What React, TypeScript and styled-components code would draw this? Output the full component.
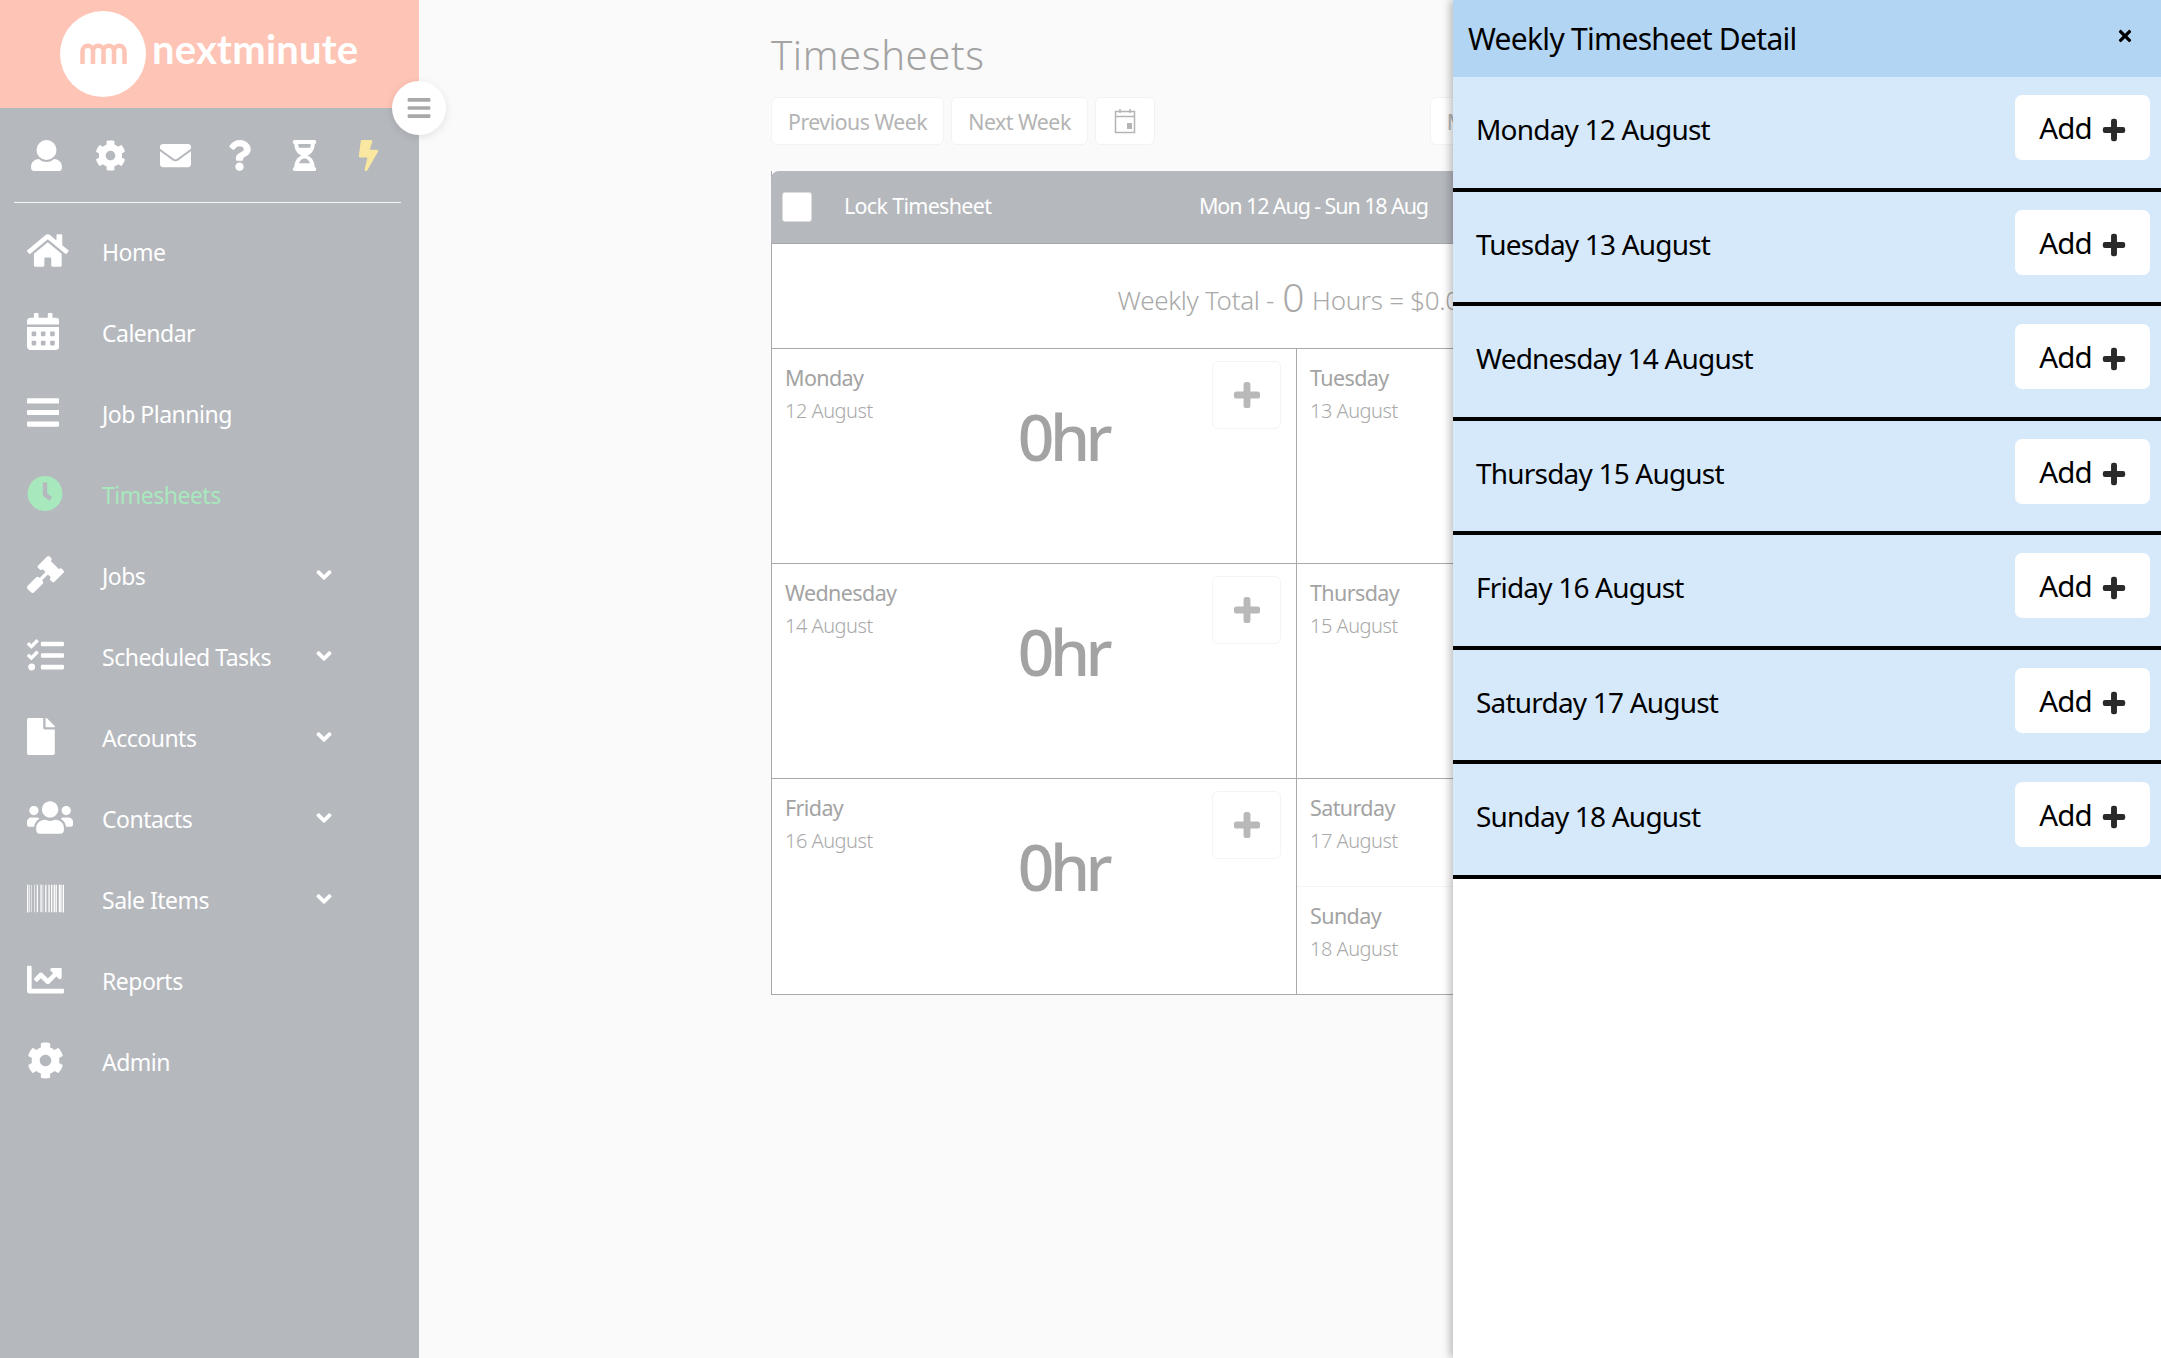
import { ReactNode } from 'react';
import styled, { createGlobalStyle } from 'styled-components';
import {
  FaAngleDown, FaBarcode, FaBars, FaBolt, FaCalendarAlt, FaChartLine, FaClock, FaCog, FaEnvelope,
  FaFile, FaGavel, FaHome, FaHourglassHalf, FaPlus, FaQuestion, FaTasks, FaTimes, FaUsers,
} from 'react-icons/fa';

const GlobalStyle = createGlobalStyle`
  html, body {
    margin: 0;
    padding: 0;
    background: #fafafa;
    font-family: "Noto Sans", "Open Sans", sans-serif;
  }
  * { box-sizing: border-box; }
`;

const Page = styled.div`
  position: relative;
  display: flex;
  height: 1358px;
  overflow: hidden;
`;

const Sidebar = styled.aside`
  position: relative;
  width: 419px;
  flex-shrink: 0;
  background: #b5b8bd;
`;

const Brand = styled.div`
  height: 108px;
  background: #fec4b5;
  display: flex;
  align-items: center;
  padding: 0 0 0 60px;
  gap: 6px;
`;

const LogoMark = styled.svg`
  width: 86px;
  height: 86px;
  flex-shrink: 0;
`;

const BrandName = styled.span`
  font-family: Lato, sans-serif;
  font-size: 40px;
  font-weight: 700;
  color: #fff;
  letter-spacing: 0.2px;
  margin-top: -10px;
`;

const Toggle = styled.button`
  position: absolute;
  left: 392px;
  top: 81px;
  width: 54px;
  height: 54px;
  border: none;
  border-radius: 50%;
  background: #fff;
  color: #a9a9a9;
  box-shadow: 0 2px 8px rgba(0, 0, 0, 0.1);
  display: flex;
  align-items: center;
  justify-content: center;
  font-size: 26px;
  padding: 0;
`;

const QuickIcons = styled.div`
  display: grid;
  grid-template-columns: repeat(6, 64.5px);
  padding: 32px 0 0 14px;
  height: 94px;
`;

const QuickIcon = styled.span<{ $accent?: boolean }>`
  display: flex;
  justify-content: center;
  align-items: flex-start;
  color: ${(p) => (p.$accent ? '#fbe8a0' : '#fff')};
  svg {
    height: 31px;
    width: 31px;
  }
`;

const Divider = styled.hr`
  margin: 0 18px 10px 14px;
  border: none;
  border-top: 1px solid #f4f4f4;
`;

const NavRow = styled.div<{ $active?: boolean }>`
  height: 81px;
  display: flex;
  align-items: center;
  padding-left: 27px;
  color: ${(p) => (p.$active ? '#a8e8bd' : '#fff')};
  font-size: 23px;
  letter-spacing: -0.5px;
`;

const NavIcon = styled.span<{ $width: number }>`
  width: 75px;
  flex-shrink: 0;
  display: flex;
  margin-bottom: 6px;
  svg {
    height: 37px;
    width: ${(p) => p.$width}px;
  }
`;

const NavLabel = styled.span`
  flex: 1;
  margin-bottom: 3px;
`;

const Chevron = styled(FaAngleDown)`
  width: 24px;
  height: 24px;
  margin: 0 83px 6px 0;
`;

const Main = styled.main`
  flex: 1;
  padding: 28px 0 0 352px;
`;

const Title = styled.h1`
  margin: 0 0 15px;
  font-size: 40px;
  line-height: 54px;
  font-weight: 300;
  color: #a3a3a3;
  letter-spacing: 0.6px;
`;

const Toolbar = styled.div`
  display: flex;
  gap: 7px;
  margin-bottom: 26px;
`;

const ToolButton = styled.button<{ $push?: number }>`
  height: 48px;
  padding: 0 16px;
  background: #fff;
  border: 1px solid #f3f3f3;
  border-radius: 6px;
  color: #b4b4b4;
  font: inherit;
  font-size: 21.3px;
  letter-spacing: -0.5px;
  margin-left: ${(p) => p.$push ?? 0}px;
  display: flex;
  align-items: center;
`;

const CalendarGlyph = styled.svg`
  width: 24px;
  height: 26px;
  margin: 0 1px;
`;

const Card = styled.section`
  width: 1050px;
  border: 1px solid #a9a9a9;
  border-top: none;
  background: #fff;
`;

const CardHead = styled.header`
  height: 73px;
  margin: 0 -1px;
  background: #b5b8bd;
  border-radius: 8px 8px 0 0;
  border-bottom: 1px solid #a9a9a9;
  display: flex;
  align-items: center;
  padding: 0 393px 3px 11px;
  color: #fff;
  font-size: 21.5px;
  letter-spacing: -0.7px;
`;

const LockBox = styled.span`
  width: 30px;
  height: 30px;
  background: #fff;
  border: 1px solid #dcdcdc;
  border-radius: 3px;
  margin: 3px 32px 0 0;
`;

const DateRange = styled.span`
  margin-left: auto;
  letter-spacing: -1.1px;
`;

const TotalRow = styled.div`
  height: 105px;
  display: flex;
  align-items: center;
  justify-content: center;
  gap: 8px;
  padding-top: 8px;
  color: #a9a9a9;
  font-size: 26px;
  font-weight: 300;
  letter-spacing: -0.3px;
  border-bottom: 1px solid #a9a9a9;
`;

const TotalHours = styled.span`
  font-size: 39px;
  line-height: 1;
  margin-top: -8px;
`;

const DayGrid = styled.div`
  display: grid;
  grid-template-columns: 524px 1fr;
  grid-auto-rows: 215px;
`;

const DayCell = styled.div<{ $right?: boolean; $last?: boolean }>`
  display: grid;
  grid-template-columns: 132px 1fr 69px;
  padding: 13px 15px 0 13px;
  border-bottom: ${(p) => (p.$last ? 'none' : '1px solid #a9a9a9')};
  border-left: ${(p) => (p.$right ? '1px solid #a9a9a9' : 'none')};
`;

const SplitCell = styled.div`
  display: grid;
  grid-template-rows: 1fr 1fr;
  border-left: 1px solid #a9a9a9;
`;

const SplitPart = styled.div<{ $divided?: boolean }>`
  padding: 13px 13px 0;
  border-bottom: ${(p) => (p.$divided ? '1px solid #f5f5f5' : 'none')};
`;

const DayName = styled.div`
  font-size: 21.5px;
  line-height: 30px;
  margin-top: 1px;
  color: #a3a3a3;
  letter-spacing: -0.6px;
`;

const DayDate = styled.div`
  font-size: 20px;
  font-weight: 300;
  line-height: 30px;
  margin-top: 3px;
  color: #a9a9a9;
  letter-spacing: -0.5px;
`;

const Hours = styled.div`
  font-size: 64px;
  font-weight: 500;
  line-height: 64px;
  margin: 43px 3px 0 0;
  color: #a3a3a3;
  text-align: center;
  letter-spacing: -4.5px;
`;

const AddDay = styled.button`
  width: 69px;
  height: 68px;
  padding: 0;
  margin-top: -1px;
  border: 1px solid #f4f4f4;
  border-radius: 6px;
  background: #fff;
  color: #b9b9b9;
  font-size: 28px;
  display: flex;
  align-items: center;
  justify-content: center;
  svg {
    stroke: currentColor;
    stroke-width: 30px;
  }
`;

const Panel = styled.aside`
  position: absolute;
  top: 0;
  right: 0;
  bottom: 0;
  width: 708px;
  background: #fff;
  box-shadow: -3px 0 8px rgba(0, 0, 0, 0.25);
  color: #000;
`;

const PanelHead = styled.header`
  height: 77px;
  background: #b3d5f4;
  display: flex;
  align-items: center;
  justify-content: space-between;
  padding: 0 27px 0 15px;
  font-size: 30px;
  letter-spacing: -0.7px;
  svg {
    width: 18px;
    height: 18px;
    margin-bottom: 5px;
  }
`;

const PanelRow = styled.div`
  height: 114.57px;
  background: #d6e9fb;
  border-bottom: 4px solid #000;
  display: flex;
  justify-content: space-between;
  padding: 18px 11px 0 23px;
  font-size: 28px;
  letter-spacing: -0.8px;
`;

const RowLabel = styled.span`
  line-height: 69px;
`;

const AddEntry = styled.button`
  width: 135px;
  height: 65px;
  border: none;
  border-radius: 7px;
  background: #fff;
  color: #000;
  font: inherit;
  font-size: 29.500px;
  letter-spacing: -0.8px;
  display: flex;
  align-items: center;
  justify-content: center;
  gap: 10px;
  padding: 0;
  svg {
    width: 24px;
    height: 24px;
    color: #2a2a2a;
    margin-top: 5px;
    stroke: currentColor;
    stroke-width: 30px;
  }
`;

const UserGlyph = () => (
  <svg viewBox="0 0 31 31" fill="currentColor">
    <circle cx="15.5" cy="10" r="10" />
    <path d="M0 27c0-5 4-8 8-8 2 2 4.500 3 7.500 3s5.500-1 7.500-3c4 0 8 3 8 8 0 2.500-1 4-3 4H3c-2 0-3-1.500-3-4z" />
  </svg>
);

const quickIcons = [UserGlyph, FaCog, FaEnvelope, FaQuestion, FaHourglassHalf];

const navItems: { label: string; icon: ReactNode; width: number; active?: boolean; more?: boolean }[] = [
  { label: 'Home', icon: <FaHome />, width: 41.6 },
  { label: 'Calendar', icon: <FaCalendarAlt />, width: 32.4 },
  { label: 'Job Planning', icon: <FaBars />, width: 32.4 },
  { label: 'Timesheets', icon: <FaClock />, width: 36 },
  { label: 'Jobs', icon: <FaGavel />, width: 37 },
  { label: 'Scheduled Tasks', icon: <FaTasks />, width: 37 },
  { label: 'Accounts', icon: <FaFile />, width: 27.8 },
  { label: 'Contacts', icon: <FaUsers />, width: 46.2 },
  { label: 'Sale Items', icon: <FaBarcode />, width: 37 },
  { label: 'Reports', icon: <FaChartLine />, width: 37 },
  { label: 'Admin', icon: <FaCog />, width: 37 },
].map((item) => ({ ...item, active: item.label === 'Timesheets', more: ['Jobs', 'Scheduled Tasks', 'Accounts', 'Contacts', 'Sale Items'].includes(item.label) }));

const days = [
  { name: 'Monday', date: '12 August' },
  { name: 'Tuesday', date: '13 August' },
  { name: 'Wednesday', date: '14 August' },
  { name: 'Thursday', date: '15 August' },
  { name: 'Friday', date: '16 August' },
];

const panelDays = [
  'Monday 12 August',
  'Tuesday 13 August',
  'Wednesday 14 August',
  'Thursday 15 August',
  'Friday 16 August',
  'Saturday 17 August',
  'Sunday 18 August',
];

const App = () => (
  <Page>
    <GlobalStyle />
    <Sidebar>
      <Brand>
        <LogoMark viewBox="0 0 86 86">
          <circle cx="43" cy="43" r="43" fill="#fff" />
          <path
            d="M22.500 53V40a5.250 5.250 0 0 1 10.500 0V53M33 40a5.250 5.250 0 0 1 10.500 0V53M43.500 40a5.250 5.250 0 0 1 10.500 0V53M54 40a5.250 5.250 0 0 1 10.500 0V53"
            fill="none"
            stroke="#fec4b5"
            strokeWidth="4.5"
          />
        </LogoMark>
        <BrandName>nextminute</BrandName>
      </Brand>
      <Toggle><FaBars /></Toggle>
      <QuickIcons>
        {quickIcons.map((Icon, i) => <QuickIcon key={i}><Icon /></QuickIcon>)}
        <QuickIcon $accent><FaBolt /></QuickIcon>
      </QuickIcons>
      <Divider />
      <nav>
        {navItems.map((item) => (
          <NavRow key={item.label} $active={item.active}>
            <NavIcon $width={item.width}>{item.icon}</NavIcon>
            <NavLabel>{item.label}</NavLabel>
            {item.more && <Chevron />}
          </NavRow>
        ))}
      </nav>
    </Sidebar>
    <Main>
      <Title>Timesheets</Title>
      <Toolbar>
        <ToolButton>Previous Week</ToolButton>
        <ToolButton>Next Week</ToolButton>
        <ToolButton>
          <CalendarGlyph viewBox="0 0 24 26" fill="none" stroke="#b4b4b4">
            <rect x="2.500" y="3.500" width="19" height="21" strokeWidth="1.500" />
            <path d="M2.500 8.500h19M7 1v4M17 1v4" strokeWidth="1.500" />
            <rect x="14" y="15" width="5" height="6" fill="#b4b4b4" stroke="none" />
          </CalendarGlyph>
        </ToolButton>
        <ToolButton $push={268}>Menu</ToolButton>
      </Toolbar>
      <Card>
        <CardHead>
          <LockBox />
          Lock Timesheet
          <DateRange>Mon 12 Aug - Sun 18 Aug</DateRange>
        </CardHead>
        <TotalRow>
          Weekly Total -
          <TotalHours>0</TotalHours>
          Hours = $0.00
        </TotalRow>
        <DayGrid>
          {days.map((day, i) => (
            <DayCell key={day.name} $right={i % 2 === 1} $last={i === 4}>
              <div>
                <DayName>{day.name}</DayName>
                <DayDate>{day.date}</DayDate>
              </div>
              <Hours>0hr</Hours>
              <AddDay><FaPlus /></AddDay>
            </DayCell>
          ))}
          <SplitCell>
            <SplitPart $divided>
              <DayName>Saturday</DayName>
              <DayDate>17 August</DayDate>
            </SplitPart>
            <SplitPart>
              <DayName>Sunday</DayName>
              <DayDate>18 August</DayDate>
            </SplitPart>
          </SplitCell>
        </DayGrid>
      </Card>
    </Main>
    <Panel>
      <PanelHead>
        Weekly Timesheet Detail
        <FaTimes />
      </PanelHead>
      {panelDays.map((day) => (
        <PanelRow key={day}>
          <RowLabel>{day}</RowLabel>
          <AddEntry>Add <FaPlus /></AddEntry>
        </PanelRow>
      ))}
    </Panel>
  </Page>
);

export default App;
